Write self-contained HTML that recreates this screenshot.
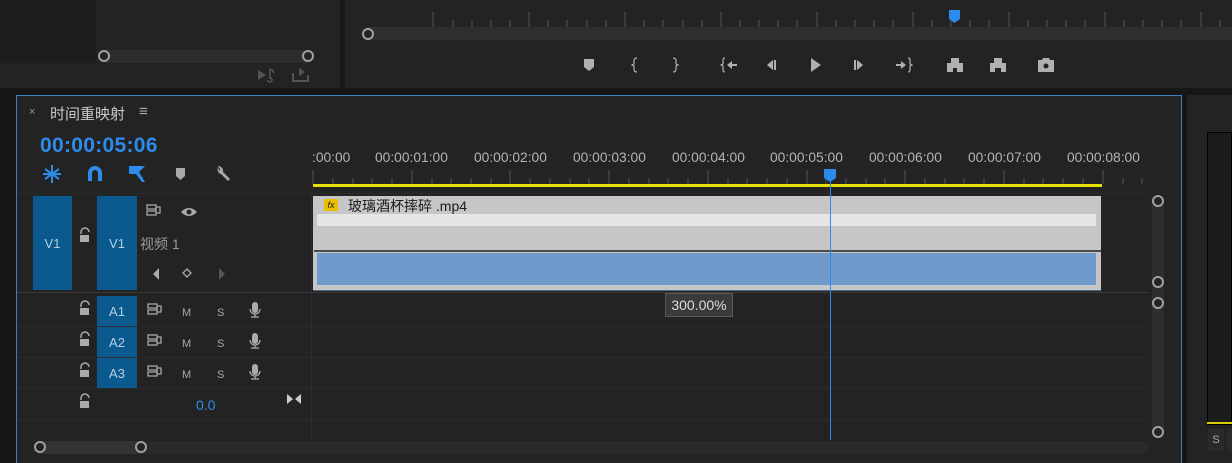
<!DOCTYPE html>
<html><head><meta charset="utf-8"><style>
*{margin:0;padding:0;box-sizing:border-box}
body{width:1232px;height:463px;background:#161616;position:relative;overflow:hidden;font-family:"Liberation Sans","Noto Sans CJK SC",sans-serif;color:#a8a8a8}
.a{position:absolute}
.t{font-size:13.8px;color:#b4b4b4;white-space:nowrap}
.circ{position:absolute;width:12px;height:12px;border:2.5px solid #a0a0a0;border-radius:50%;background:#232323}
.blue{background:#0b5a8f;color:#b9cfe0;font-size:13px;display:flex;align-items:center;justify-content:center}
.ic{position:absolute;color:#a0a0a0;font-size:12px}
.row{position:absolute;left:17px;width:1131px;height:1px;background:#2c2c2c}
</style></head><body>
<div class="a" style="left:0;top:0;width:340px;height:88px;background:#232323"></div>
<div class="a" style="left:0;top:0;width:96px;height:63px;background:#1d1d1d"></div>
<div class="a" style="left:340px;top:0;width:5px;height:88px;background:#181818"></div>
<div class="a" style="left:345px;top:0;width:887px;height:88px;background:#232323"></div>
<div class="a" style="left:104px;top:50px;width:205px;height:13px;background:#2d2d2d"></div>
<div class="circ" style="left:98px;top:50px"></div>
<div class="circ" style="left:302px;top:50px"></div>
<svg class="a" style="left:255px;top:66px" width="60" height="18" fill="#555">
<path d="M3 4l8 5l-8 5z"/><path d="M13 14a2 2 0 1 0 2-2V3q3 1 4 4" fill="none" stroke="#555" stroke-width="1.5"/>
<path d="M38 7v8h15v-6" fill="none" stroke="#555" stroke-width="2"/><path d="M44 2l6 4l-6 4z"/>
</svg>
<svg class="a" style="left:345px;top:0" width="887" height="45">
<g stroke="#555" stroke-width="1">
<path d="M88 12V27M108 20V27M127 20V27M146 20V27M165 20V27M184 12V27M203 20V27M222 20V27M242 20V27M261 20V27M280 12V27M299 20V27M318 20V27M338 20V27M357 20V27M376 12V27M395 20V27M414 20V27M433 20V27M452 20V27M472 12V27M491 20V27M510 20V27M529 20V27M548 20V27M568 12V27M587 20V27M606 20V27M625 20V27M644 20V27M664 12V27M683 20V27M702 20V27M721 20V27M740 20V27M760 12V27M779 20V27M798 20V27M817 20V27M836 20V27M856 12V27M875 20V27"/>
</g>
<rect x="20" y="27" width="867" height="13" fill="#2f2f2f"/>
<path d="M604 10h11v9l-5.5 4l-5.5-4z" fill="#2d8ceb"/>
</svg>
<div class="circ" style="left:362px;top:28px"></div>
<svg class="a" style="left:575px;top:52px" width="490" height="26" fill="#b0b0b0">
<path d="M9 7h10v8l-5 4l-5-4z"/>
<path d="M62 6q-3 0-3 3v3l-2 1l2 1v3q0 3 3 3" fill="none" stroke="#b0b0b0" stroke-width="1.2"/>
<path d="M98 6q3 0 3 3v3l2 1l-2 1v3q0 3-3 3" fill="none" stroke="#b0b0b0" stroke-width="1.2"/>
<path d="M150 6q-2 0-2 2v4l-2 1l2 1v4q0 2 2 2" fill="none" stroke="#b0b0b0" stroke-width="1.2"/><path d="M152 13l5-4v3h5v2h-5v3z"/>
<path d="M192 13l6-5v10z"/><rect x="199" y="8" width="2" height="10"/>
<path d="M236 6l10 7l-10 7z"/>
<rect x="279" y="8" width="2" height="10"/><path d="M282 8l6 5l-6 5z"/>
<path d="M321 12h5v-3l5 4l-5 4v-3h-5z"/><path d="M333 6q2 0 2 2v4l2 1l-2 1v4q0 2-2 2" fill="none" stroke="#b0b0b0" stroke-width="1.2"/>
<path d="M376 6h8v5h4v9h-6v-4h-4v4h-6v-9h4z"/>
<path d="M419 6h8v5h4v9h-5v-4h-6v4h-5v-9h4z"/>
<path d="M463 8h4l1-2h6l1 2h4v12h-16z"/><circle cx="471" cy="14" r="2.5" fill="#232323"/>
</svg>
<div class="a" style="left:16px;top:95px;width:1166px;height:368px;background:#232323;border:1px solid #3d7fc1;border-bottom:none"></div>
<div class="a" style="left:1187px;top:95px;width:45px;height:368px;background:#232323"></div>
<div class="a" style="left:1207px;top:132px;width:25px;height:293px;background:#1c1c1c;border:1px solid #000"></div>
<div class="a" style="left:1207px;top:422px;width:25px;height:2px;background:#d8d000"></div>
<div class="a" style="left:1208px;top:429px;width:16px;height:22px;background:#2a2a2a;color:#aaa;font-size:11px;text-align:center;line-height:22px">S</div>
<div class="a" style="left:1227px;top:429px;width:8px;height:22px;background:#2a2a2a"></div>
<div class="ic" style="left:29px;top:106px;font-size:11px;color:#999">×</div>
<div class="a t" style="left:50px;top:103px;font-size:15px;color:#c8c8c8">时间重映射</div>
<div class="ic" style="left:139px;top:103px;font-size:15px;color:#aaa">≡</div>
<div class="a" style="left:40px;top:134px;font-size:21px;font-weight:bold;color:#2d8ceb;letter-spacing:0.3px">00:00:05:06</div>
<svg class="a" style="left:40px;top:163px" width="200" height="22">
<g stroke="#2d8ceb" stroke-width="2" fill="none"><path d="M12 2v18M5 6l14 10M19 6L5 16M3 11h18"/></g>
<path d="M48 18v-8a7 7 0 0 1 14 0v8h-4v-8a3 3 0 0 0-6 0v8z" fill="#2d8ceb"/>
<path d="M89 3h16l-6 6l6 10h-3l-6-8h-7z" fill="#2d8ceb"/>
<path d="M136 5h9v8l-4.5 4l-4.5-4z" fill="#a8a8a8"/>
<path d="M178 4a5 5 0 0 0 3 7l7 7l2-2l-7-7a5 5 0 0 0-5-6l2 3l-1 2z" fill="#a8a8a8"/>
</svg>
<div class="a t" style="left:312px;top:150px">:00:00</div>
<div class="a t" style="left:375px;top:150px">00:00:01:00</div>
<div class="a t" style="left:474px;top:150px">00:00:02:00</div>
<div class="a t" style="left:573px;top:150px">00:00:03:00</div>
<div class="a t" style="left:672px;top:150px">00:00:04:00</div>
<div class="a t" style="left:770px;top:150px">00:00:05:00</div>
<div class="a t" style="left:869px;top:150px">00:00:06:00</div>
<div class="a t" style="left:968px;top:150px">00:00:07:00</div>
<div class="a t" style="left:1067px;top:150px">00:00:08:00</div>
<svg class="a" style="left:312px;top:168px" width="840" height="20">
<g stroke="#555"><path d="M1 2V16M100 2V16M198 2V16M297 2V16M396 2V16M495 2V16M593 2V16M692 2V16M791 2V16"/>
<path d="M21 10V16M41 10V16M60 10V16M80 10V16M120 10V16M139 10V16M159 10V16M179 10V16M218 10V16M238 10V16M258 10V16M277 10V16M317 10V16M337 10V16M356 10V16M376 10V16M416 10V16M435 10V16M455 10V16M475 10V16M514 10V16M534 10V16M554 10V16M573 10V16M613 10V16M633 10V16M652 10V16M672 10V16M712 10V16M731 10V16M751 10V16M771 10V16M811 10V16M830 10V16"/></g>
<rect x="1" y="16" width="789" height="3" fill="#e8e000"/>
<path d="M512 1h12v9l-6 4l-6-4z" fill="#2d8ceb"/>
</svg>
<div class="a" style="left:311px;top:193px;width:1px;height:247px;background:#2c2c2c"></div>
<div class="row" style="top:193px"></div>
<div class="row" style="top:292px;background:#3a3a3a"></div>
<div class="row" style="top:326px"></div>
<div class="row" style="top:357px"></div>
<div class="row" style="top:388px"></div>
<div class="row" style="top:420px"></div>
<div class="a" style="left:1152px;top:196px;width:12px;height:240px;background:#2e2e2e;border-radius:6px"></div>
<div class="circ" style="left:1152px;top:195px"></div>
<div class="circ" style="left:1152px;top:276px"></div>
<div class="circ" style="left:1152px;top:297px"></div>
<div class="circ" style="left:1152px;top:426px"></div>
<div class="a" style="left:36px;top:441px;width:1112px;height:13px;background:#2a2a2a;border-radius:6px"></div>
<div class="a" style="left:36px;top:441px;width:110px;height:13px;background:#333;border-radius:6px"></div>
<div class="circ" style="left:34px;top:441px"></div>
<div class="circ" style="left:135px;top:441px"></div>
<div class="a blue" style="left:33px;top:196px;width:39px;height:94px">V1</div>
<div class="a blue" style="left:97px;top:196px;width:40px;height:94px">V1</div>
<div class="a t" style="left:140px;top:234px;font-size:14px;color:#999">视频 1</div>
<svg class="a" style="left:145px;top:202px" width="90" height="80" fill="#aaa">
<path d="M2 3h9v4h-9zM2 9h9v4h-9zM11 5h4v6h-4z" fill="none" stroke="#aaa" stroke-width="1.3"/>
<path d="M36 10q8-8 16 0q-8 8-16 0z"/><circle cx="44" cy="10" r="2.5" fill="#232323"/>
<path d="M14 78l-6-6l6-6z"/>
<path d="M42 67l4 4l-4 4l-4-4z" fill="none" stroke="#aaa" stroke-width="1.3"/>
<path d="M74 66l6 6l-6 6z" fill="#555"/>
</svg>
<svg class="a" style="left:75px;top:226px" width="20" height="20"><path d="M6 8v-2a4 4 0 0 1 8 0" fill="none" stroke="#aaa" stroke-width="1.5"/><rect x="5" y="9" width="9" height="7" fill="#aaa"/></svg>
<div class="a" style="left:313px;top:196px;width:788px;height:94px;background:#c6c6c6"></div>
<div class="a" style="left:317px;top:214px;width:779px;height:12px;background:#e6e6e6"></div>
<div class="a" style="left:314px;top:250px;width:787px;height:2px;background:#4a4a4a"></div>
<div class="a" style="left:317px;top:253px;width:779px;height:32px;background:#7099cc"></div>
<div class="a" style="left:313px;top:290px;width:788px;height:1px;background:#4f6f90"></div>
<div class="a" style="left:324px;top:199px;width:14px;height:12px;background:#e8c000;color:#222;font-size:9px;font-style:italic;text-align:center;line-height:12px">fx</div>
<div class="a" style="left:348px;top:196px;font-size:14px;color:#1a1a1a">玻璃酒杯摔碎 .mp4</div>
<div class="a" style="left:830px;top:182px;width:1px;height:258px;background:#2d8ceb"></div>
<div class="a" style="left:665px;top:293px;width:68px;height:24px;background:#3a3a3a;border:1px solid #5a5a5a;color:#ddd;font-size:14px;text-align:center;line-height:22px">300.00%</div>
<div class="a blue" style="left:97px;top:296px;width:40px;height:30px">A1</div>
<div class="a blue" style="left:97px;top:327px;width:40px;height:30px">A2</div>
<div class="a blue" style="left:97px;top:358px;width:40px;height:30px">A3</div>
<svg class="a" style="left:75px;top:296px" width="240" height="125" fill="#aaa">
<g id="r">
<path d="M6 11v-2a4 4 0 0 1 8 0" fill="none" stroke="#aaa" stroke-width="1.5"/><rect x="5" y="12" width="9" height="7"/>
<path d="M73 8h9v4h-9zM73 14h9v4h-9zM82 10h4v6h-4z" fill="none" stroke="#aaa" stroke-width="1.3"/>
<text x="107" y="20" font-size="11" font-family="Liberation Sans" fill="#aaa">M</text>
<text x="142" y="20" font-size="11" font-family="Liberation Sans" fill="#aaa">S</text>
<rect x="177" y="6" width="6" height="11" rx="3"/><path d="M175 13a5 5 0 0 0 10 0M180 18v3M176 21h8" fill="none" stroke="#aaa" stroke-width="1.3"/>
</g>
<use href="#r" y="31"/><use href="#r" y="62"/>
<path d="M6 104v-2a4 4 0 0 1 8 0" fill="none" stroke="#aaa" stroke-width="1.5"/><rect x="5" y="105" width="9" height="7"/>
<path d="M212 98l6 5l-6 5zM226 98l-6 5l6 5z" fill="#ccc"/>
</svg>
<div class="a" style="left:196px;top:397px;font-size:14px;color:#2d8ceb">0.0</div>
</body></html>
